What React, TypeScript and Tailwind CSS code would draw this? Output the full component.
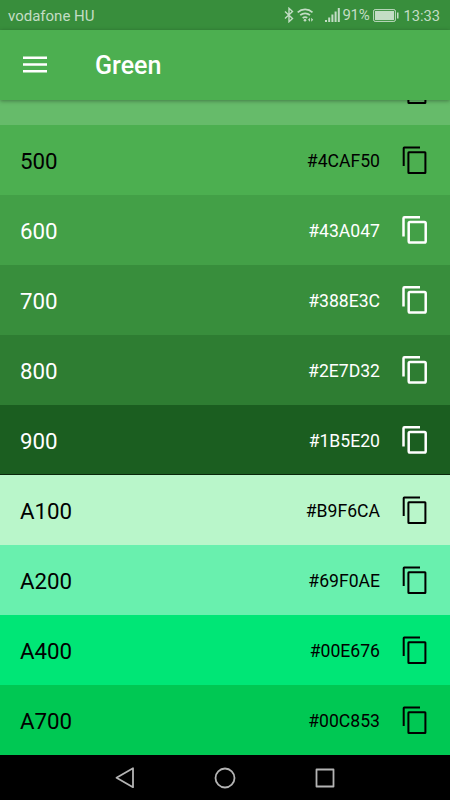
type Shade = {
  name: string;
  hex: string;
  row: string;
  light?: boolean;
};

const shades: Shade[] = [
  { name: "500", hex: "#4CAF50", row: "bg-[#4caf50] text-black" },
  { name: "600", hex: "#43A047", row: "bg-[#43a047] text-white", light: true },
  { name: "700", hex: "#388E3C", row: "bg-[#388e3c] text-white", light: true },
  { name: "800", hex: "#2E7D32", row: "bg-[#2e7d32] text-white", light: true },
  { name: "900", hex: "#1B5E20", row: "bg-[#1b5e20] text-white shadow-[inset_0_-1px_0_#0a260c]", light: true },
  { name: "A100", hex: "#B9F6CA", row: "bg-[#b9f6ca] text-black" },
  { name: "A200", hex: "#69F0AE", row: "bg-[#69f0ae] text-black" },
  { name: "A400", hex: "#00E676", row: "bg-[#00e676] text-black" },
  { name: "A700", hex: "#00C853", row: "bg-[#00c853] text-black" },
];

// the light variant is a little heavier and rounder
function CopyIcon({ light }: { light?: boolean }) {
  if (light) {
    return (
      <svg width="30" height="30" viewBox="0 0 30 30" fill="none" stroke="currentColor" strokeWidth="2.5" className="shrink-0">
        <path d="M20 2.200H4.500Q3.500 2.200 3.500 3.200V21.500" />
        <rect x="8.700" y="7" width="17" height="20.500" rx="1.300" />
      </svg>
    );
  }
  return (
    <svg width="30" height="30" viewBox="0 0 30 30" fill="none" stroke="currentColor" strokeWidth="2" className="shrink-0">
      <path d="M20 2.400H4.200Q3.700 2.400 3.700 2.900V21" />
      <rect x="8.400" y="7.200" width="17" height="20.700" rx=".5" />
    </svg>
  );
}

function StatusBar() {
  return (
    <div className="flex h-[30px] items-center bg-[#388e3c] pr-[10px] pl-2 text-[#c3ddc5]">
      <span className="pt-[2px] text-[15px] leading-none">vodafone HU</span>
      <svg width="10" height="16" viewBox="0 0 10 16" className="ml-auto" fill="none" stroke="currentColor" strokeWidth="1.400">
        <path d="M1 4.500 8.500 11.500 5 14.700V1.300L8.500 4.500 1 11.500" />
      </svg>
      <svg width="17" height="16" viewBox="0 0 17 16" className="ml-[3px]" fill="none" stroke="currentColor" strokeWidth="1.700">
        <path d="M.7 5.300a11 11 0 0 1 14.800 0M3.200 8.200a7.300 7.300 0 0 1 9.800 0M5.700 11a3.800 3.800 0 0 1 4.600-.2" />
        <circle cx="8" cy="13.200" r="1.300" fill="currentColor" stroke="none" />
        <path d="M13 10.700v4l-2-2zM14.200 10.700v4l2-2z" fill="currentColor" stroke="none" />
      </svg>
      <svg width="15" height="14" viewBox="0 0 15 14" className="ml-[11px]" fill="currentColor">
        <path d="M0 12h2v2H0zM3.200 9.500h2V14h-2zM6.400 6.500h2V14h-2zM9.600 3.500h2V14h-2zM12.800 0h2v14h-2z" />
      </svg>
      <span className="ml-[2px] w-[28px] text-[15px] leading-none tracking-[-0.3px]">91%</span>
      <svg width="26" height="13" viewBox="0 0 26 13" className="ml-[3px]">
        <rect x=".6" y=".6" width="21.800" height="11.800" rx="1.500" fill="none" stroke="currentColor" />
        <rect x="2" y="2" width="19" height="9" fill="currentColor" />
        <path d="M24 3.500h1.500v6H24z" fill="currentColor" />
      </svg>
      <span className="ml-1 pt-[2px] text-[14.7px] leading-none">13:33</span>
    </div>
  );
}

function NavBar() {
  return (
    <div className="flex h-[45px] items-center justify-center gap-[76px] bg-black text-[#b4b4b4]">
      <svg width="24" height="24" viewBox="0 0 24 24" fill="none" stroke="currentColor" strokeWidth="1.800" strokeLinejoin="round">
        <path d="M20 2.200v19L3.500 11.700z" />
      </svg>
      <svg width="24" height="24" viewBox="0 0 24 24" fill="none" stroke="currentColor" strokeWidth="1.800">
        <circle cx="12" cy="12" r="9.500" />
      </svg>
      <svg width="24" height="24" viewBox="0 0 24 24" fill="none" stroke="currentColor" strokeWidth="1.800" strokeLinejoin="round">
        <rect x="3.500" y="3.500" width="17" height="17" />
      </svg>
    </div>
  );
}

export default function App() {
  return (
    <div className="flex h-[800px] w-[450px] flex-col overflow-hidden bg-black font-[Roboto,sans-serif]">
      <StatusBar />
      <header className="relative z-10 flex h-[70px] items-center bg-[#4caf50] pl-[23px] text-white shadow-[0_1px_4px_rgba(0,0,0,0.35)]">
        <svg width="24" height="18" viewBox="0 0 24 18" fill="currentColor">
          <path d="M0 .5h24v2.500H0zM0 7.300h24v2.500H0zM0 14h24v2.500H0z" />
        </svg>
        <h1 className="ml-12 pt-px text-[25px] leading-none font-medium">Green</h1>
      </header>

      <main>
        {/* 400 is mostly scrolled under the app bar */}
        <div className="flex h-[25px] items-end justify-end overflow-hidden bg-[#66bb6a] pr-5 pb-5">
          <CopyIcon />
        </div>
        {shades.map((shade) => (
          <div key={shade.name} className={`flex h-[70px] items-center pr-5 pl-5 ${shade.row}`}>
            <span className="pt-[3px] text-[22.3px] leading-none">{shade.name}</span>
            <span className="mr-5 ml-auto pt-[3px] text-[17.6px] leading-none">{shade.hex}</span>
            <CopyIcon light={shade.light} />
          </div>
        ))}
      </main>
      <NavBar />
    </div>
  );
}
